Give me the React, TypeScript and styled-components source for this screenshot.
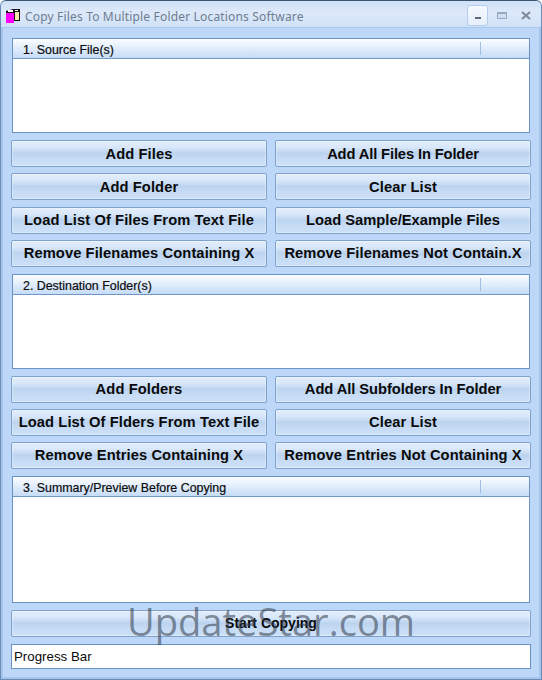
import React from "react";
import styled, { createGlobalStyle } from "styled-components";

const Global = createGlobalStyle`
  html, body { margin: 0; padding: 0; width: 542px; height: 680px; overflow: hidden; }
  * { box-sizing: border-box; }
`;

const Frame = styled.div`
  position: relative;
  width: 542px;
  height: 680px;
  background: #bcd7f8;
  border: 1px solid #6a8db8;
  border-top-color: #3a5574;
  border-radius: 6px 6px 0 0;
  box-shadow: inset 2px 0 0 #a6c4ec, inset -2px 0 0 #a6c4ec, inset 0 -2px 0 #a6c4ec;
  font-family: "Liberation Sans", Arial, sans-serif;
  overflow: hidden;
`;

const TitleBar = styled.div`
  height: 27px;
  display: flex;
  align-items: flex-start;
  padding-left: 4px;
  background: linear-gradient(#cfe1f7 0%, #dde9fa 45%, #cfe1f8 100%);
  border-bottom: 1px solid #a9c8ec;
`;

const AppIcon = styled.svg`
  width: 16px;
  height: 16px;
  margin-top: 7px;
  flex: none;
`;

const TitleText = styled.div`
  margin: 8px 0 0 4px;
  font-family: "Noto Sans", "Open Sans", sans-serif;
  font-size: 12px;
  line-height: 16px;
  letter-spacing: 0.17px;
  color: #6d7d90;
  white-space: nowrap;
  flex: 1;
`;

const WinButtons = styled.div`
  display: flex;
  margin-right: 5px;
  margin-top: 4px;
`;

const WinBtn = styled.div<{ $w: number; $active?: boolean }>`
  width: ${(p) => p.$w}px;
  height: 21px;
  display: flex;
  align-items: center;
  justify-content: center;
  border-radius: 3px;
  ${(p) =>
    p.$active
      ? "background: linear-gradient(#f4f8fe, #e6effb); border: 1px solid #b4cdec;"
      : ""}
`;

const Content = styled.div`
  display: flex;
  flex-direction: column;
  padding: 10px 10px 0 10px;
`;

const Panel = styled.div<{ $h: number }>`
  height: ${(p) => p.$h}px;
  margin: 0 0 0 1px;
  width: 518px;
  background: #fff;
  border: 1px solid #6a93c4;
`;

const PanelHead = styled.div`
  height: 20px;
  display: flex;
  align-items: center;
  padding: 3px 0 0 10px;
  background: linear-gradient(#fbfdff 0%, #e3eefc 45%, #c6dcf7 100%);
  border-bottom: 1px solid #6f97c8;
  font-size: 12.4px;
  -webkit-text-stroke: 0.2px #0c0c0c;
  color: #0c0c0c;
  position: relative;
`;

const HeadDivider = styled.span`
  position: absolute;
  right: 48px;
  top: 3px;
  bottom: 3px;
  width: 1px;
  background: #9fbfe2;
`;

const ButtonGrid = styled.div<{ $gap: number }>`
  display: grid;
  grid-template-columns: 256px 256px;
  column-gap: 8px;
  row-gap: ${(p) => p.$gap}px;
  margin: 7px 0;
`;

const Btn = styled.div<{ $ls?: number }>`
  height: 27px;
  display: flex;
  align-items: center;
  justify-content: center;
  border: 1px solid #7ea2cc;
  border-radius: 2px;
  background: linear-gradient(#e2edfb 0%, #d8e7f9 25%, #bcd3ef 50%, #c6dbf4 70%, #cde1f8 100%);
  box-shadow: inset 0 0 0 1px rgba(255, 255, 255, 0.3);
  font-weight: 700;
  font-size: 14.7px;
  letter-spacing: ${(p) => p.$ls ?? 0.1}px;
  color: #0a0a0a;
  white-space: nowrap;
`;

const StartBtn = styled(Btn)`
  width: 520px;
  margin: 7px 0;
  font-size: 14px;
  letter-spacing: 0;
`;

const Progress = styled.div`
  width: 520px;
  height: 25px;
  background: #fff;
  border: 1px solid #6a93c4;
  display: flex;
  align-items: center;
  padding: 1px 0 0 2px;
  font-size: 13.3px;
  color: #0a0a0a;
`;

const Watermark = styled.div`
  position: absolute;
  left: 126px;
  top: 595px;
  font-family: "Open Sans", "Noto Sans", sans-serif;
  font-weight: 400;
  font-size: 38.1px;
  line-height: 50px;
  color: rgba(45, 55, 70, 0.55);
  pointer-events: none;
  white-space: nowrap;
`;

type Item = { t: string; ls?: number };

const grid1: Item[] = [
  { t: "Add Files" },
  { t: "Add All Files In Folder", ls: -0.12 },
  { t: "Add Folder" },
  { t: "Clear List" },
  { t: "Load List Of Files From Text File" },
  { t: "Load Sample/Example Files", ls: 0.02 },
  { t: "Remove Filenames Containing X" },
  { t: "Remove Filenames Not Contain.X" },
];
const grid2: Item[] = [
  { t: "Add Folders" },
  { t: "Add All Subfolders In Folder", ls: -0.05 },
  { t: "Load List Of Flders From Text File" },
  { t: "Clear List" },
  { t: "Remove Entries Containing X" },
  { t: "Remove Entries Not Containing X" },
];

const PanelBox = ({ title, h }: { title: string; h: number }) => (
  <Panel $h={h}>
    <PanelHead>
      {title}
      <HeadDivider />
    </PanelHead>
  </Panel>
);

export default function App() {
  return (
    <Frame>
      <Global />
      <TitleBar>
        <AppIcon viewBox="0 0 16 16">
          <path d="M1 3 L8 1 L15 1 L15 13 L1 13 Z" fill="#111" />
          <rect x="1" y="5" width="8" height="10" fill="#f0f" />
          <rect x="10" y="4" width="4" height="8" fill="#f5e7a8" />
          <rect x="3" y="2" width="5" height="2" fill="#fff" />
          <rect x="10" y="2" width="3" height="1" fill="#fff" />
        </AppIcon>
        <TitleText>Copy Files To Multiple Folder Locations Software</TitleText>
        <WinButtons>
          <WinBtn $w={21} $active>
            <svg width="8" height="8" viewBox="0 0 8 8">
              <rect x="1" y="5" width="6" height="2" fill="#5c6a78" />
            </svg>
          </WinBtn>
          <WinBtn $w={28}>
            <svg width="10" height="8" viewBox="0 0 10 8">
              <rect x="0.5" y="0.5" width="9" height="6" fill="#cfdff3" stroke="#98a9bc" />
              <rect x="0.5" y="0.5" width="9" height="1.5" fill="#98a9bc" />
            </svg>
          </WinBtn>
          <WinBtn $w={20}>
            <svg width="10" height="9" viewBox="0 0 10 9">
              <path d="M1 1 L9 8 M9 1 L1 8" stroke="#7f8b99" strokeWidth="2.2" />
            </svg>
          </WinBtn>
        </WinButtons>
      </TitleBar>
      <Content>
        <PanelBox title="1. Source File(s)" h={95} />
        <ButtonGrid $gap={6.33}>
          {grid1.map((b) => (
            <Btn key={b.t} $ls={b.ls}>{b.t}</Btn>
          ))}
        </ButtonGrid>
        <PanelBox title="2. Destination Folder(s)" h={95} />
        <ButtonGrid $gap={6}>
          {grid2.map((b) => (
            <Btn key={b.t} $ls={b.ls}>{b.t}</Btn>
          ))}
        </ButtonGrid>
        <PanelBox title="3. Summary/Preview Before Copying" h={127} />
        <StartBtn>Start Copying</StartBtn>
        <Progress>Progress Bar</Progress>
      </Content>
      <Watermark>UpdateStar.com</Watermark>
    </Frame>
  );
}
